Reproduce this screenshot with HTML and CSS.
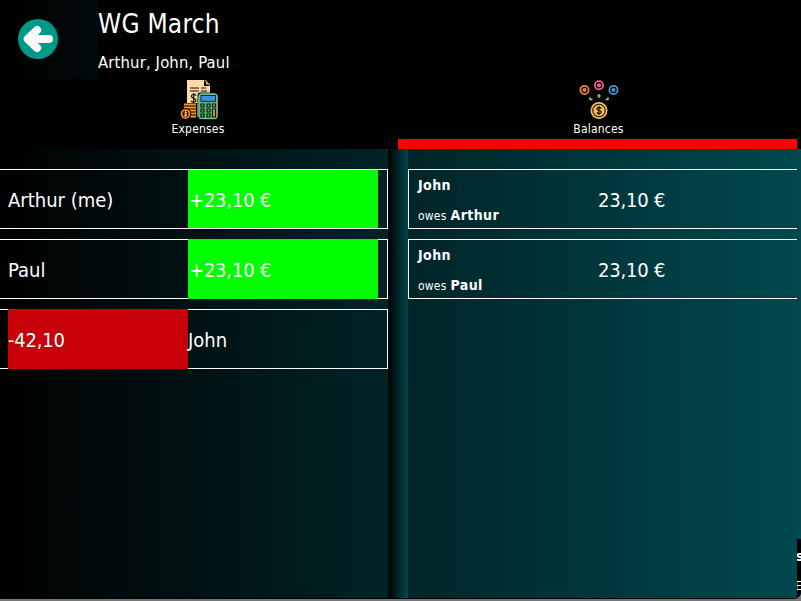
FILE: index.html
```html
<!DOCTYPE html>
<html lang="en">
<head>
<meta charset="utf-8">
<title>WG March</title>
<link rel="stylesheet" href="styles.css">
</head>
<body>
<div class="app">
  <header class="header">
    <div class="back">
      <svg width="40" height="40" viewBox="0 0 40 40"><circle cx="20" cy="20" r="20" fill="#009887"/><path d="M19 11L9.500 20L19 29V20Z" fill="#fafafa"/><path d="M19.200 11L9.700 20L19.200 29M12 20H31" fill="none" stroke="#fafafa" stroke-width="8" stroke-linecap="round" stroke-linejoin="round"/></svg>
    </div>
    <div class="heading">
      <h1 class="title">WG March</h1>
      <p class="members">Arthur, John, Paul</p>
    </div>
  </header>
  <nav class="tabs">
    <div class="tab">
      <svg class="icon" width="40" height="40" viewBox="0 0 40 40">
        <path d="M8 0H26L31 5V37H8Z" fill="#ffd8aa"/><path d="M25 0V6H31Z" fill="#000"/><path d="M27 0.500L30.500 4.500H27Z" fill="#f7a440"/>
        <path d="M11 8H20M22 8H27M11 11H20M22 11H28" stroke="#111" stroke-width="1.200"/>
        <path d="M17 15.500C15 13.500 12 14.500 12.500 16.500C13 18.500 17 18 17 20.500C17 22.500 13.500 22.500 12 21M14.700 13V24" fill="none" stroke="#111" stroke-width="1.200"/>
        <path d="M4 23H18V39H4Z" fill="#000"/><path d="M5 24.500H17M5 27.500H17M10 30.500H17M11 33.500H17M11 36.500H17" stroke="#f6961f" stroke-width="2"/>
        <circle cx="6.500" cy="34" r="5.800" fill="#000"/><circle cx="6.500" cy="34" r="4" fill="#2b1600" stroke="#f6961f" stroke-width="1.700"/><path d="M8 32.500H6V34H7.500V35.500H5M6.500 31V37" fill="none" stroke="#ffb04a"/>
        <rect x="18.500" y="12.500" width="21" height="27" rx="3" fill="#000"/><rect x="19.800" y="13.800" width="18.400" height="24.900" rx="2.500" fill="#5ab67b" stroke="#7bcf98"/>
        <rect x="22" y="15.500" width="14.500" height="5.800" fill="#3f91e5" stroke="#102d3e"/>
        <g fill="#5ab67b" stroke="#04180e" stroke-width="1.200"><path d="M22 24h3v3h-3zM28 24h3v3h-3zM22 29h3v3h-3zM28 29h3v3h-3zM22 34h3v3h-3zM28 34h3v3h-3z"/><path d="M33.500 24h3v3h-3zM33.500 29h3v8h-3z" fill="#ff951f"/></g>
      </svg>
      <span class="tab-label expenses">Expenses</span>
    </div>
    <div class="tab active">
      <svg class="icon" width="40" height="40" viewBox="0 0 40 40">
        <g fill="none" stroke-width="1.800"><g stroke="#f08345"><circle cx="5.500" cy="10" r="4.100"/><circle cx="5.500" cy="10" r="1.200"/></g><g stroke="#ed6684"><circle cx="20" cy="5.300" r="4.100"/><circle cx="20" cy="5.300" r="1.200"/></g><g stroke="#4b98d9"><circle cx="34.500" cy="10" r="4.100"/><circle cx="34.500" cy="10" r="1.200"/></g></g>
        <path d="M20 14V18M18.300 15.800H21.700M11 17V19.500H13.500M29 17V19.500H26.500" fill="none" stroke="#91d69d" stroke-width="1.300"/>
        <circle cx="20" cy="30.500" r="8.500" fill="#f6be51"/><circle cx="20" cy="30.500" r="6.200" fill="none" stroke="#171000" stroke-width="1.100"/>
        <path d="M22.300 28.500C20.500 26.500 17.500 27.500 18 29.300C18.500 31 22.400 30 22.200 32C22 34 19 34 17.700 32.500M20 26V35" fill="none" stroke="#171000" stroke-width="1.200"/>
      </svg>
      <span class="tab-label balances">Balances</span>
    </div>
  </nav>
  <main class="content">
    <section class="totals">
      <div class="row"><div class="cell name">Arthur (me)</div><div class="cell plus">+23,10 €</div></div>
      <div class="row tall"><div class="cell name">Paul</div><div class="cell plus">+23,10 €</div></div>
      <div class="row tall"><div class="cell minus">-42,10</div><div class="cell name">John</div></div>
    </section>
    <div class="divider"></div>
    <section class="debts">
      <div class="debt"><div class="who"><b>John</b><span><small>owes</small> <b>Arthur</b></span></div><div class="cell amount">23,10 €</div></div>
      <div class="debt"><div class="who"><b>John</b><span><small>owes</small> <b>Paul</b></span></div><div class="cell amount">23,10 €</div></div>
    </section>
  </main>
  <aside class="peek"><span class="first">s</span><span class="second">E</span></aside>
</div>
</body>
</html>
```
FILE: styles.css
```css
* { box-sizing: border-box; }
body {
  margin: 0;
  overflow: hidden;
  background: #777;
  color: #fff;
  font-family: "DejaVu Sans Condensed", "DejaVu Sans", sans-serif;
  font-stretch: condensed;
}
.app {
  position: relative;
  width: 801px;
  height: 599px;
  overflow: hidden;
  background: #000;
  border-bottom: 1px solid #000;
  border-bottom-right-radius: 7px;
}
.header { display: flex; height: 79px; }
.back {
  width: 98px;
  padding: 19px 18px;
  background: linear-gradient(90deg, #000, #00090b);
}
.back svg { display: block; }
.title {
  margin: 0;
  padding-top: 7px;
  font-size: 26px;
  line-height: 34px;
  font-weight: normal;
  letter-spacing: 0.25px;
}
.members { margin: 10px 0 0; font-size: 16.5px; line-height: 23px; letter-spacing: 0.15px; }
.tabs { display: flex; height: 70px; padding-right: 4px; }
.tab {
  display: flex;
  flex-direction: column;
  align-items: center;
  width: 398px;
  padding-top: 1px;
  border-bottom: 10px solid transparent;
}
.tab.active { width: 399px; padding-left: 2px; border-color: #f00; }
.tab .icon { display: block; flex: none; }
.tab-label { font-size: 12px; line-height: 18px; letter-spacing: 0.2px; white-space: nowrap; }
.expenses { margin-right: 2px; }
.content {
  display: flex;
  height: 449px;
  background: linear-gradient(90deg, #000 0, #00484e 797px);
}
.totals { width: 388px; padding-top: 20px; }
.row {
  display: flex;
  height: 60px;
  margin-bottom: 10px;
  padding-left: 8px;
  border: 1px solid #fff;
  border-left: 0;
}
.tall > .cell { margin: -1px 0; }
.cell {
  display: flex;
  align-items: center;
  width: 190px;
  padding-top: 2px;
  font-size: 20px;
  letter-spacing: -0.2px;
  white-space: nowrap;
}
.name, .minus { width: 180px; }
.name { letter-spacing: 0; }
.plus { padding-left: 1px; background: #0f0; }
.minus { background: #c8000a; }
.divider { width: 20px; background: linear-gradient(90deg, #000, #00484e); }
.debts { width: 389px; padding-top: 20px; }
.debt {
  display: flex;
  height: 60px;
  margin-bottom: 10px;
  border: 1px solid #fff;
  border-right: 0;
}
.who {
  display: flex;
  flex-direction: column;
  width: 189px;
  padding-left: 9px;
  font-size: 14px;
  line-height: 30px;
  white-space: nowrap;
}
.who b { letter-spacing: 0.4px; }
.who small { font-size: 12px; letter-spacing: 0.2px; }
.peek {
  position: absolute;
  left: 797px;
  top: 539px;
  width: 4px;
  height: 60px;
  overflow: hidden;
  background: #000;
  font-size: 14px;
  font-weight: bold;
  line-height: 35px;
}
.peek span { display: block; }
.peek .first { margin-left: -1px; }
.peek .second { margin-left: -2px; font-size: 12px; line-height: 25px; font-weight: normal; }
```
